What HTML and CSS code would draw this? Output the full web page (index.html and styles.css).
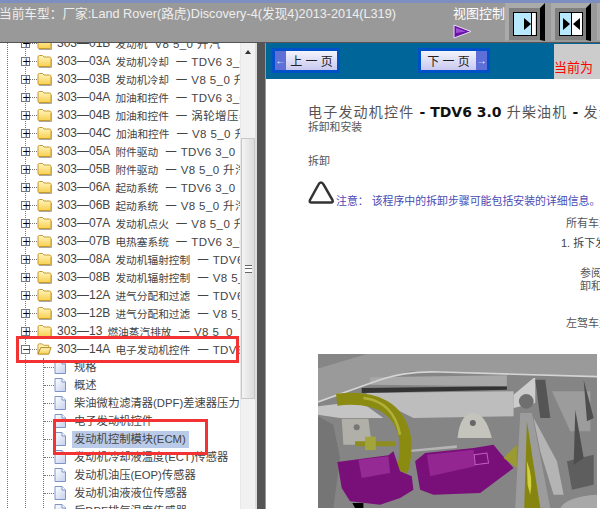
FILE: index.html
```html
<!DOCTYPE html>
<html lang="zh">
<head>
    <meta charset="UTF-8">
    <title>当前车型</title>
    <link rel="stylesheet" href="styles.css">
</head>
<body>

<svg class="defs" width="0" height="0">
    <defs>
        <linearGradient id="folderFill" x1="0" y1="0" x2="0" y2="1">
            <stop offset="0" stop-color="#fff6c0"/>
            <stop offset="1" stop-color="#f8cf50"/>
        </linearGradient>
        <linearGradient id="pageFill" x1="0" y1="0" x2="1" y2="1">
            <stop offset="0" stop-color="#ffffff"/>
            <stop offset="1" stop-color="#c4d0ee"/>
        </linearGradient>
        <symbol id="folder" viewBox="0 0 15 14">
            <path d="M1 3 Q1 1.5 2.500 1.500 H5.500 L7 3 H12.500 Q14 3 14 4.500 V11.500 Q14 12.500 13 12.500 H2 Q1 12.500 1 11.500 Z" fill="url(#folderFill)" stroke="#c69a2c"/>
            <path d="M2 13.500 H14.500 V5" fill="none" stroke="#a8a8a8"/>
        </symbol>
        <symbol id="folder-open" viewBox="0 0 16 14">
            <path d="M1 3 Q1 1.500 2.500 1.500 H5.500 L7 3 H12.500 V6 H4 L1 12 Z" fill="#fff0b0" stroke="#c69a2c"/>
            <path d="M4 5.500 H15 L12.500 12.500 H1 Z" fill="url(#folderFill)" stroke="#b08a28"/>
        </symbol>
        <symbol id="page" viewBox="0 0 12 14">
            <path d="M1 .5 H8 L11.500 4 V13.500 H1 Z" fill="url(#pageFill)" stroke="#7e94c8"/>
            <path d="M8 .5 V4 H11.500" fill="#fff" stroke="#7e94c8"/>
        </symbol>
    </defs>
</svg>

<header class="topbar">
    <div class="car-title">当前车型：厂家:Land Rover(路虎)Discovery-4(发现4)2013-2014(L319)</div>
    <div class="view-ctrl">
        <span class="view-label">视图控制</span>
        <svg class="view-arrow" width="19" height="15" viewBox="0 0 19 15">
            <path d="M1 1 L18 7.500 L1 14 Z" fill="#6a12a8" stroke="#e8e0f0"/>
            <path d="M3 4 L13 7.500 L3 9 Z" fill="#a050d8"/>
        </svg>
    </div>
    <div class="view-btn">
        <svg width="24" height="24" viewBox="0 0 24 24">
            <rect x=".5" y=".5" width="23" height="23" fill="#b8e8fc" stroke="#000"/>
            <rect x="19" y="1" width="3" height="22" fill="#fff"/>
            <path d="M18.500 1 V23" stroke="#000"/>
            <path d="M11 6 L18 12 L11 18 Z" fill="#000"/>
        </svg>
    </div>
    <div class="view-btn">
        <svg width="24" height="24" viewBox="0 0 24 24">
            <rect x=".5" y=".5" width="23" height="23" fill="#fff" stroke="#000"/>
            <rect x="1" y="1" width="11" height="22" fill="#b8e8fc"/>
            <path d="M12.500 1 V23" stroke="#000"/>
            <path d="M4 6 L11 12 L4 18 Z" fill="#000"/>
            <path d="M21 6 L14 12 L21 18 Z" fill="#000"/>
        </svg>
    </div>
    <div class="view-btn"></div>
</header>

<div class="main">
    <nav class="tree">
        <div class="branch outer">
            <div class="branch">
                <div class="row"><i class="box">+</i><i class="dots"></i><svg class="folder"><use href="#folder"/></svg><span class="code">303—01B</span><span class="cn">发动机</span><span class="sep">V8 5_0 升汽</span></div>
                <div class="row"><i class="box">+</i><i class="dots"></i><svg class="folder"><use href="#folder"/></svg><span class="code">303—03A</span><span class="cn">发动机冷却</span><span class="sep">一 TDV6 3_0</span></div>
                <div class="row"><i class="box">+</i><i class="dots"></i><svg class="folder"><use href="#folder"/></svg><span class="code">303—03B</span><span class="cn">发动机冷却</span><span class="sep">一 V8 5_0 升</span></div>
                <div class="row"><i class="box">+</i><i class="dots"></i><svg class="folder"><use href="#folder"/></svg><span class="code">303—04A</span><span class="cn">加油和控件</span><span class="sep">一 TDV6 3_0</span></div>
                <div class="row"><i class="box">+</i><i class="dots"></i><svg class="folder"><use href="#folder"/></svg><span class="code">303—04B</span><span class="cn">加油和控件</span><span class="sep">一 涡轮增压器</span></div>
                <div class="row"><i class="box">+</i><i class="dots"></i><svg class="folder"><use href="#folder"/></svg><span class="code">303—04C</span><span class="cn">加油和控件</span><span class="sep">一 V8 5_0 升</span></div>
                <div class="row"><i class="box">+</i><i class="dots"></i><svg class="folder"><use href="#folder"/></svg><span class="code">303—05A</span><span class="cn">附件驱动</span><span class="sep">一 TDV6 3_0</span></div>
                <div class="row"><i class="box">+</i><i class="dots"></i><svg class="folder"><use href="#folder"/></svg><span class="code">303—05B</span><span class="cn">附件驱动</span><span class="sep">一 V8 5_0 升汽</span></div>
                <div class="row"><i class="box">+</i><i class="dots"></i><svg class="folder"><use href="#folder"/></svg><span class="code">303—06A</span><span class="cn">起动系统</span><span class="sep">一 TDV6 3_0</span></div>
                <div class="row"><i class="box">+</i><i class="dots"></i><svg class="folder"><use href="#folder"/></svg><span class="code">303—06B</span><span class="cn">起动系统</span><span class="sep">一 V8 5_0 升汽</span></div>
                <div class="row"><i class="box">+</i><i class="dots"></i><svg class="folder"><use href="#folder"/></svg><span class="code">303—07A</span><span class="cn">发动机点火</span><span class="sep">一 V8 5_0 升</span></div>
                <div class="row"><i class="box">+</i><i class="dots"></i><svg class="folder"><use href="#folder"/></svg><span class="code">303—07B</span><span class="cn">电热塞系统</span><span class="sep">一 TDV6 3_0</span></div>
                <div class="row"><i class="box">+</i><i class="dots"></i><svg class="folder"><use href="#folder"/></svg><span class="code">303—08A</span><span class="cn">发动机辐射控制</span><span class="sep">一 TDV6</span></div>
                <div class="row"><i class="box">+</i><i class="dots"></i><svg class="folder"><use href="#folder"/></svg><span class="code">303—08B</span><span class="cn">发动机辐射控制</span><span class="sep">一 V8 5_0</span></div>
                <div class="row"><i class="box">+</i><i class="dots"></i><svg class="folder"><use href="#folder"/></svg><span class="code">303—12A</span><span class="cn">进气分配和过滤</span><span class="sep">一 TDV6</span></div>
                <div class="row"><i class="box">+</i><i class="dots"></i><svg class="folder"><use href="#folder"/></svg><span class="code">303—12B</span><span class="cn">进气分配和过滤</span><span class="sep">一 V8 5_0</span></div>
                <div class="row"><i class="box">+</i><i class="dots"></i><svg class="folder"><use href="#folder"/></svg><span class="code">303—13</span><span class="cn">燃油蒸汽排放</span><span class="sep">一 V8 5_0</span></div>
                <div class="row"><i class="box">−</i><i class="dots"></i><svg class="folder"><use href="#folder-open"/></svg><span class="code">303—14A</span><span class="cn">电子发动机控件</span><span class="sep">一 TDV6</span></div>
                <div class="branch sub">
                    <div class="leaf"><i class="dots-long"></i><svg class="page"><use href="#page"/></svg><span class="leaf-text">规格</span></div>
                    <div class="leaf"><i class="dots-long"></i><svg class="page"><use href="#page"/></svg><span class="leaf-text">概述</span></div>
                    <div class="leaf"><i class="dots-long"></i><svg class="page"><use href="#page"/></svg><span class="leaf-text">柴油微粒滤清器(DPF)差速器压力</span></div>
                    <div class="leaf"><i class="dots-long"></i><svg class="page"><use href="#page"/></svg><span class="leaf-text">电子发动机控件</span></div>
                    <div class="leaf"><i class="dots-long"></i><svg class="page"><use href="#page"/></svg><span class="leaf-text selected">发动机控制模块(ECM)</span></div>
                    <div class="leaf"><i class="dots-long"></i><svg class="page"><use href="#page"/></svg><span class="leaf-text">发动机冷却液温度(ECT)传感器</span></div>
                    <div class="leaf"><i class="dots-long"></i><svg class="page"><use href="#page"/></svg><span class="leaf-text">发动机油压(EOP)传感器</span></div>
                    <div class="leaf"><i class="dots-long"></i><svg class="page"><use href="#page"/></svg><span class="leaf-text">发动机油液液位传感器</span></div>
                    <div class="leaf"><i class="dots-long"></i><svg class="page"><use href="#page"/></svg><span class="leaf-text">后DPF排气温度传感器</span></div>
                </div>
            </div>
        </div>
        <div class="mark mark-folder"></div>
        <div class="mark mark-leaf"></div>
    </nav>

    <div class="scrollbar">
        <div class="scroll-up"></div>
        <div class="scroll-thumb"><span class="grip"></span></div>
    </div>

    <div class="splitter"></div>

    <section class="content">
        <div class="pager">
            <div class="page-btn prev"><span class="btn-arrow">&#8592;</span><span class="btn-text">上 一 页</span></div>
            <div class="page-btn next"><span class="btn-text">下 一 页</span><span class="btn-arrow">&#8594;</span></div>
            <div class="current">当前为</div>
        </div>
        <article class="doc">
            <h1 class="doc-title">电子发动机控件 <b>- TDV6 3.0</b> 升柴油机 <b>-</b> 发动机控制模块</h1>
            <p class="doc-sub">拆卸和安装</p>
            <p class="doc-section">拆卸</p>
            <div class="note">
                <svg class="warn" width="27" height="25" viewBox="0 0 27 25">
                    <path d="M13 2.500 Q14.500 2.500 15.500 4.500 L24.500 20 Q25.500 22.500 23 22.500 H3.500 Q1 22.500 2 20 L10.500 4.500 Q11.500 2.500 13 2.500 Z" fill="#fff" stroke="#333" stroke-width="2.500"/>
                </svg>
                <span class="note-text">注意：&nbsp;该程序中的拆卸步骤可能包括安装的详细信息。</span>
            </div>
            <div class="steps">
                <p class="step-head">所有车型</p>
                <p class="step-one">1. 拆下发动机</p>
                <p class="step-ref">参阅：发动机<br>卸和安装</p>
                <p class="step-head left-drive">左驾车型</p>
            </div>
            <svg class="photo" width="279" height="154" viewBox="54 48 836 462" preserveAspectRatio="none">
                <rect x="54" y="48" width="836" height="462" fill="#858585"/>
                <path d="M54 48 H890 V115 L330 100 L54 190 Z" fill="#9a9a9a"/>
                <path d="M54 48 H200 L60 90 H54 Z" fill="#868686"/>
                <path d="M200 165 L640 160 L640 235 L340 240 L200 170 Z" fill="#bdbdbd"/>
                <path d="M54 205 L180 190 L250 240 H120 L54 230 Z" fill="#c4c4c4"/>
                <path d="M185 150 L620 145 V155 L185 165 Z" fill="#333"/>
                <path d="M210 118 L620 112 V145 L210 140 Z" fill="#a8a8a8"/>
                <path d="M54 192 L240 125 Q320 98 420 102 L890 116" fill="none" stroke="#d4d4d4" stroke-width="5"/>
                <path d="M125 242 H205 L215 320 H130 Z" fill="#b0b0a8"/>
                <path d="M472 300 Q480 225 520 225 Q555 225 575 300 Z" fill="#c4c4bc"/>
                <circle cx="170" cy="268" r="9" fill="#777"/>
                <circle cx="518" cy="255" r="9" fill="#666"/>
                <path d="M330 335 L470 322 V330 L330 342 Z" fill="#b5b5b5"/>
                <path d="M54 235 L100 260 L120 360 L100 510 H54 Z" fill="#757575"/>
                <path d="M110 185 Q290 165 315 300 Q320 360 305 400" fill="none" stroke="#8b8b12" stroke-width="36"/>
                <path d="M190 180 Q280 190 300 290" fill="none" stroke="#b0b038" stroke-width="8"/>
                <path d="M165 310 H285 V325 H165 Z" fill="#8e8e20"/>
                <rect x="195" y="296" width="32" height="40" fill="#a4a43c"/>
                <path d="M112 372 L265 352 L280 340 L300 400 L335 415 L340 455 L300 480 L240 500 L150 490 L125 450 Z" fill="#790f78"/>
                <path d="M175 365 L265 355 L270 405 L185 420 Z" fill="#962a94"/>
                <path d="M345 370 L375 345 L520 330 L580 320 L600 345 L640 390 L600 420 L540 465 L400 470 L360 455 Z" fill="#790f78"/>
                <path d="M380 350 L520 335 L525 385 L390 415 Z" fill="#932690"/>
                <path d="M522 350 L560 345 L565 375 L525 380 Z" fill="none" stroke="#c060c0" stroke-width="3"/>
                <path d="M610 360 L650 320 L650 390 Z" fill="#9a9a30"/>
                <path d="M645 510 L660 225 H695 L750 510 Z" fill="#9c9c9c"/>
                <path d="M672 510 L680 250 L720 510 Z" fill="#858510"/>
                <path d="M680 370 Q700 420 690 470 L682 440 Z" fill="#d0d040"/>
                <path d="M640 170 L700 120 H705 V195 L640 210 Z" fill="#cccccc"/>
                <circle cx="678" cy="190" r="22" fill="#6f6f6f"/>
                <path d="M700 240 L770 370 L790 470 L760 470 L720 340 Z" fill="#b4b4b4"/>
                <path d="M705 125 L735 125 L750 240 L720 240 Z" fill="#555"/>
                <path d="M755 160 H870 V280 H810 Z" fill="#9c9c9c"/>
                <path d="M800 370 L880 350 L880 440 L815 455 Z" fill="#5e5e5e"/>
                <path d="M825 215 L850 360 L820 380 Z" fill="#4e4e4e"/>
                <path d="M850 125 L880 240 L860 250 Z" fill="#4e4e4e"/>
                <path d="M780 510 Q800 475 890 470 V510 Z" fill="#a8a8a8"/>
                <path d="M157 495 H190 V510 H165 Z" fill="#000"/>
            </svg>
        </article>
    </section>
</div>

</body>
</html>
```

FILE: styles.css
```css
* {
    box-sizing: border-box;
}
html, body {
    margin: 0;
    padding: 0;
    height: 100%;
    overflow: hidden;
}
body {
    width: 600px;
    height: 509px;
    font-family: "Liberation Sans", "Noto Sans CJK SC", sans-serif;
    background: #fff;
    color: #444;
    display: flex;
    flex-direction: column;
}
.defs {
    position: absolute;
}

/* barra superior */
.topbar {
    height: 43px;
    flex: none;
    background: #999;
    border-top: 3px solid #7d8fc0;
    border-bottom: 1px solid #555;
    display: flex;
    overflow: hidden;
}
.car-title {
    width: 454px;
    flex: none;
    margin-left: -1px;
    padding-top: 2px;
    color: #eee;
    font-size: 12.7px;
    line-height: 18px;
    white-space: nowrap;
}
.view-ctrl {
    width: 52px;
    flex: none;
    display: flex;
    flex-direction: column;
    padding-top: 3px;
}
.view-label {
    color: #fff;
    font-size: 13px;
    line-height: 15px;
    white-space: nowrap;
}
.view-arrow {
    margin-top: 3px;
    display: block;
}
.view-btn {
    width: 40px;
    height: 38px;
    flex: none;
    margin-right: 6px;
    padding: 4px 0 0 4px;
    background: #808080;
    border-style: solid;
    border-width: 5px 5px 1px 4px;
    border-color: #aaa #000 #999 #aaa;
}
.view-btn svg {
    display: block;
}

.main {
    flex: 1;
    display: flex;
    min-height: 0;
}

/* arbol */
.tree {
    width: 240px;
    flex: none;
    position: relative;
    overflow: hidden;
    background: #fff;
    font-size: 12px;
    padding-left: 7px;
}
.branch {
    margin-left: 17px;
    border-left: 1px dotted #777;
}
.outer {
    margin-left: 0;
    margin-top: -9px;
}
.row, .leaf {
    height: 18px;
    display: flex;
    align-items: center;
    white-space: nowrap;
}
.box {
    width: 9px;
    height: 9px;
    flex: none;
    margin-left: -5px;
    background: #fff;
    border: 1px solid #777;
    color: #000;
    font-style: normal;
    font-size: 10px;
    line-height: 7px;
    text-align: center;
    font-family: "DejaVu Sans", sans-serif;
}
.dots {
    width: 7px;
    flex: none;
    border-top: 1px dotted #777;
}
.dots-long {
    width: 10px;
    flex: none;
    border-top: 1px dotted #777;
}
.folder {
    width: 15px;
    height: 14px;
    flex: none;
    margin-right: 5px;
}
.code {
    margin-right: 5px;
}
.cn {
    font-size: 10.7px;
    margin-right: 7px;
}
.sep {
    font-size: 11.500px;
    letter-spacing: .4px;
}
.sub {
    margin-left: 17px;
}
.page {
    width: 12px;
    height: 14px;
    flex: none;
    margin-right: 6px;
}
.leaf {
    font-size: 11.300px;
}
.leaf-text {
    height: 17px;
    line-height: 17px;
    padding: 0 2px;
}
.selected {
    background: #b9cbe8;
    padding-right: 3px;
}
.mark {
    position: absolute;
    border: 3px solid #f33333;
}
.mark-folder {
    left: 16px;
    top: 293px;
    width: 223px;
    height: 27px;
}
.mark-leaf {
    left: 53px;
    top: 376px;
    width: 155px;
    height: 36px;
}

/* barra de scroll */
.scrollbar {
    width: 15px;
    flex: none;
    background: #f1f1f1;
    border-left: 1px solid #e8e8e8;
    padding-top: 7px;
}
.scroll-up {
    width: 0;
    height: 0;
    margin: 0 0 0 4px;
    border: 3px solid transparent;
    border-top: 0;
    border-bottom: 4px solid #333;
}
.scroll-thumb {
    margin-top: 84px;
    height: 261px;
    display: flex;
    align-items: center;
    justify-content: center;
    background: linear-gradient(90deg, #f4f4f4, #dcdcdc);
    border: 1px solid #c8c8c8;
}
.grip {
    width: 7px;
    height: 8px;
    border-top: 1px solid #666;
    border-bottom: 1px solid #666;
    background: linear-gradient(#fff 0 2px, #666 2px 3px, #fff 3px);
}
.splitter {
    width: 11px;
    flex: none;
    background: #555;
    border-left: 2px solid #ddd;
    border-right: 1px solid #999;
}

/* contenido */
.content {
    flex: 1;
    min-width: 0;
    display: flex;
    flex-direction: column;
    overflow: hidden;
}
.pager {
    height: 36px;
    flex: none;
    background: #006699;
    display: flex;
}
.page-btn {
    height: 25px;
    margin-top: 5px;
    display: flex;
    align-items: center;
    background: linear-gradient(#f4f4fc, #c8c8f0);
    border: 3px solid #0050c8;
    color: #222;
    font-size: 12px;
    white-space: nowrap;
}
.prev {
    width: 68px;
    margin-left: 6px;
}
.next {
    width: 72px;
    margin-left: 78px;
}
.btn-arrow {
    width: 11px;
    height: 19px;
    flex: none;
    background: #5f6fd8;
    color: #fff;
    font-size: 10px;
    font-weight: bold;
    line-height: 19px;
    text-align: center;
}
.btn-text {
    flex: 1;
    text-align: center;
}
.current {
    width: 46px;
    margin: 1px 0 0 64px;
    padding-top: 15px;
    background: #ccc;
    color: #f00;
    font-size: 13px;
    line-height: 18px;
    white-space: nowrap;
}
.doc {
    flex: 1;
    min-height: 0;
    overflow: hidden;
    padding-left: 42px;
    color: #555;
    white-space: nowrap;
}
.doc p {
    margin: 0;
}
.doc-title {
    margin: 25px 0 0;
    font-size: 14px;
    line-height: 17px;
    font-weight: normal;
    letter-spacing: 1.2px;
}
.doc-title b {
    color: #111;
    font-family: "DejaVu Sans", sans-serif;
    font-size: 14px;
    letter-spacing: 0;
}
.doc-sub {
    font-size: 10.800px;
    line-height: 13px;
    margin-top: 1px;
}
.doc .doc-section {
    margin-top: 20px;
    font-size: 11px;
    line-height: 14px;
}
.note {
    margin-top: 12px;
    height: 25px;
    display: flex;
    align-items: flex-end;
    color: #4a4ab4;
    font-size: 10.900px;
    line-height: 15px;
}
.warn {
    flex: none;
    margin-right: 1px;
}
.note-text {
    margin-bottom: -4px;
}
.steps {
    padding-left: 258px;
    font-size: 11px;
    line-height: 13px;
}
.doc .step-head {
    margin-top: 12px;
}
.doc .step-one {
    margin: 7px 0 0 -5px;
    color: #444;
}
.doc .step-ref {
    margin: 17px 0 0 14px;
}
.doc .left-drive {
    margin-top: 24px;
}
.photo {
    display: block;
    margin: 24px 0 0 10px;
    filter: blur(.4px);
}
```
